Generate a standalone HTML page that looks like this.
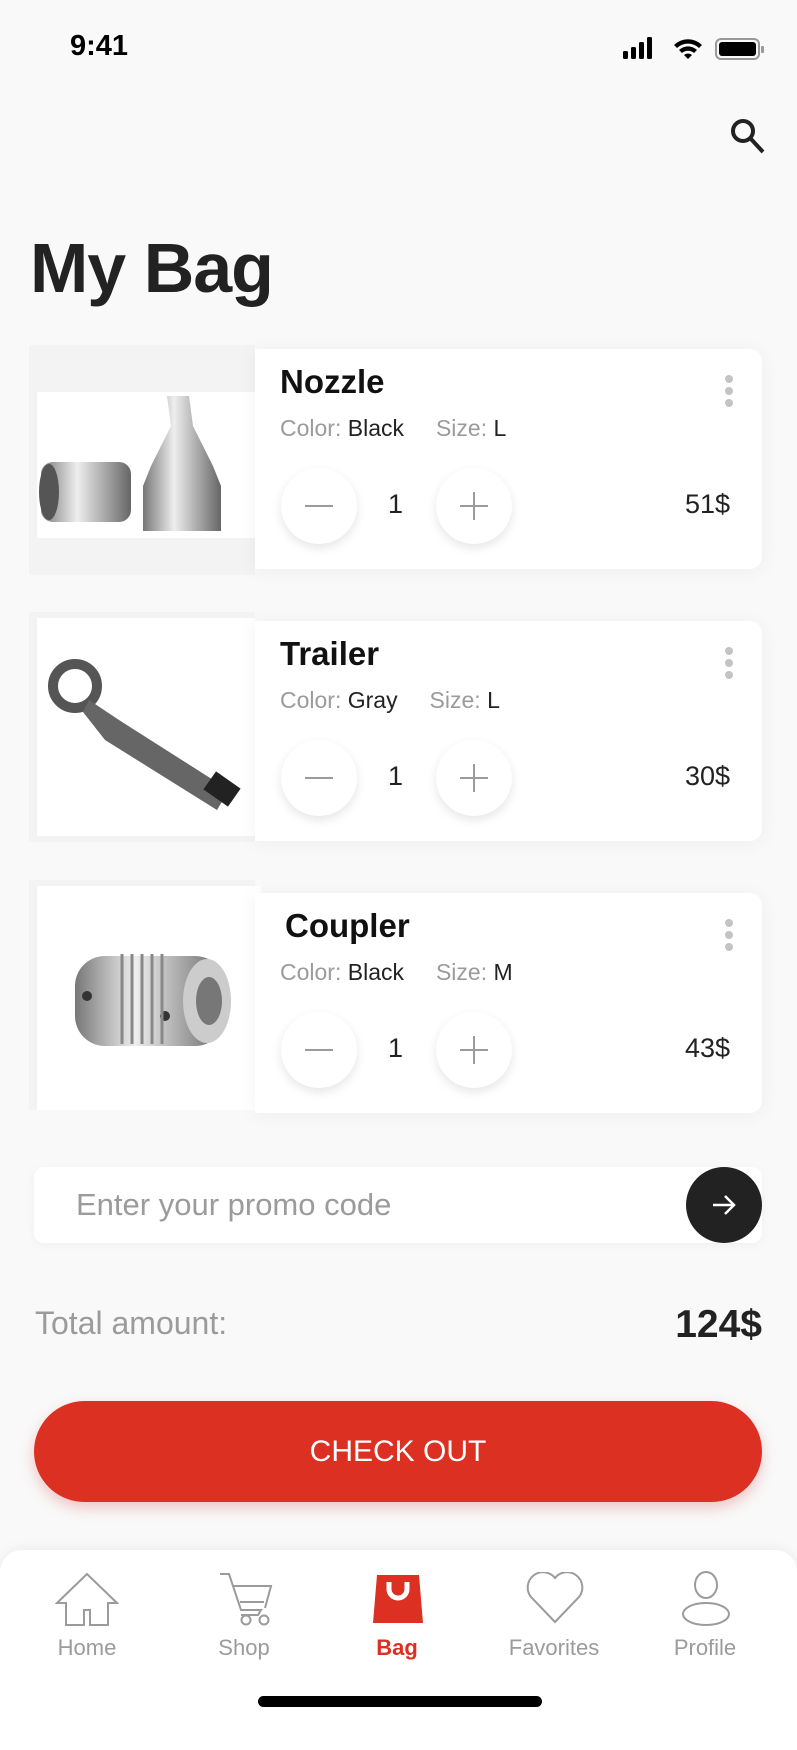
<!DOCTYPE html>
<html><head><meta charset="utf-8"><style>
*{margin:0;padding:0;box-sizing:border-box}
body{width:797px;height:1726px;background:#f9f9f9;font-family:"Liberation Sans",Arial,sans-serif;position:relative;overflow:hidden;color:#222}
.abs{position:absolute}
.card{position:absolute;left:255px;width:507px;height:220px;background:#fff;border-radius:0 12px 12px 0;box-shadow:0 2px 20px rgba(0,0,0,.05)}
.imgbox{position:absolute;left:29px;width:226px;height:230px;background:#f3f3f3}
.title{position:absolute;left:25px;top:14px;font-size:33px;font-weight:bold;color:#111}
.meta{position:absolute;left:25px;top:66px;font-size:23px;color:#9b9b9b}
.meta b{font-weight:normal;color:#222}
.btn{position:absolute;top:119px;width:76px;height:76px;border-radius:50%;background:#fff;box-shadow:0 4px 10px rgba(0,0,0,.1)}
.qty{position:absolute;left:133px;top:140px;font-size:27px;color:#222}
.price{position:absolute;right:32px;top:140px;font-size:27px;color:#222}
.dots{position:absolute;right:29px;top:26px;width:8px}
.dots i{display:block;width:8px;height:8px;border-radius:50%;background:#c4c4c4;margin-bottom:4px}
.nav{position:absolute;text-align:center;font-size:22px;color:#9b9b9b;width:130px;top:1635px}
</style></head><body>
<div class="abs" style="left:70px;top:30px;font-size:29px;font-weight:bold;color:#000">9:41</div>
<svg class="abs" style="left:623px;top:36px" width="145" height="26" viewBox="0 0 145 26">
<rect x="0" y="15" width="5" height="8" rx="1.5"/><rect x="8" y="11" width="5" height="12" rx="1.5"/><rect x="16" y="6" width="5" height="17" rx="1.5"/><rect x="24" y="1" width="5" height="22" rx="1.5"/>
<path d="M65 23l-4-4a6 6 0 0 1 8 0z M56 14a13 13 0 0 1 18 0l-3 3a9 9 0 0 0-12 0z M51 9a20 20 0 0 1 28 0l-3 3a16 16 0 0 0-22 0z"/>
<rect x="93" y="3" width="43" height="20" rx="5" fill="none" stroke="#999" stroke-width="2"/><rect x="96" y="6" width="37" height="14" rx="3"/><rect x="138" y="10" width="3" height="7" rx="1" fill="#999"/>
</svg>
<svg class="abs" style="left:728px;top:116px" width="40" height="40" viewBox="0 0 40 40"><circle cx="15" cy="15" r="10" fill="none" stroke="#222" stroke-width="4"/><path d="M23 23l12 13" stroke="#222" stroke-width="4"/></svg>
<div class="abs" style="left:30px;top:228px;font-size:70px;font-weight:bold;color:#222;letter-spacing:-1px">My Bag</div>

<!-- card 1 -->
<div class="imgbox" style="top:345px"><div class="abs" style="left:8px;top:47px;width:218px;height:146px;background:#fff"></div>
<svg class="abs" style="left:8px;top:47px" width="218" height="146" viewBox="0 0 218 146"><defs><linearGradient id="m" x1="0" x2="1"><stop offset="0" stop-color="#777"/><stop offset=".4" stop-color="#eee"/><stop offset=".7" stop-color="#aaa"/><stop offset="1" stop-color="#666"/></linearGradient></defs>
<rect x="4" y="70" width="90" height="60" rx="12" fill="url(#m)"/><ellipse cx="12" cy="100" rx="10" ry="28" fill="#555"/>
<path d="M130 4h22l4 30 20 40 8 20v45h-78v-45l8-20 20-40z" fill="url(#m)"/></svg></div>
<div class="card" style="top:349px">
<div class="title">Nozzle</div><div class="meta">Color: <b>Black</b> &nbsp;&nbsp;&nbsp; Size: <b>L</b></div>
<div class="dots"><i></i><i></i><i></i></div>
<div class="btn" style="left:26px"><div class="abs" style="left:24px;top:37px;width:28px;height:2px;background:#9b9b9b"></div></div>
<div class="qty">1</div>
<div class="btn" style="left:181px"><div class="abs" style="left:24px;top:37px;width:28px;height:2px;background:#9b9b9b"></div><div class="abs" style="left:37px;top:24px;width:2px;height:28px;background:#9b9b9b"></div></div>
<div class="price">51$</div></div>

<!-- card 2 -->
<div class="imgbox" style="top:612px"><div class="abs" style="left:8px;top:6px;width:218px;height:218px;background:#fff"></div>
<svg class="abs" style="left:8px;top:6px" width="218" height="218" viewBox="0 0 218 218"><circle cx="38" cy="68" r="22" fill="none" stroke="#555" stroke-width="10"/><path d="M52 82l30 20 110 70-12 20-112-70-22-28z" fill="#666"/><rect x="170" y="160" width="30" height="22" transform="rotate(35 185 171)" fill="#222"/></svg></div>
<div class="card" style="top:621px">
<div class="title">Trailer</div><div class="meta">Color: <b>Gray</b> &nbsp;&nbsp;&nbsp; Size: <b>L</b></div>
<div class="dots"><i></i><i></i><i></i></div>
<div class="btn" style="left:26px"><div class="abs" style="left:24px;top:37px;width:28px;height:2px;background:#9b9b9b"></div></div>
<div class="qty">1</div>
<div class="btn" style="left:181px"><div class="abs" style="left:24px;top:37px;width:28px;height:2px;background:#9b9b9b"></div><div class="abs" style="left:37px;top:24px;width:2px;height:28px;background:#9b9b9b"></div></div>
<div class="price">30$</div></div>

<!-- card 3 -->
<div class="imgbox" style="top:880px"><div class="abs" style="left:8px;top:6px;width:224px;height:224px;background:#fff"></div>
<svg class="abs" style="left:8px;top:6px" width="224" height="224" viewBox="0 0 224 224"><rect x="38" y="70" width="150" height="90" rx="30" fill="url(#m)"/><ellipse cx="170" cy="115" rx="24" ry="42" fill="#ccc"/><ellipse cx="172" cy="115" rx="13" ry="24" fill="#777"/><circle cx="50" cy="110" r="5" fill="#333"/><circle cx="128" cy="130" r="5" fill="#333"/><path d="M85 68v90M95 68v90M105 68v90M115 68v90M125 68v90" stroke="#888" stroke-width="3"/></svg></div>
<div class="card" style="top:893px">
<div class="title" style="left:30px">Coupler</div><div class="meta">Color: <b>Black</b> &nbsp;&nbsp;&nbsp; Size: <b>M</b></div>
<div class="dots"><i></i><i></i><i></i></div>
<div class="btn" style="left:26px"><div class="abs" style="left:24px;top:37px;width:28px;height:2px;background:#9b9b9b"></div></div>
<div class="qty">1</div>
<div class="btn" style="left:181px"><div class="abs" style="left:24px;top:37px;width:28px;height:2px;background:#9b9b9b"></div><div class="abs" style="left:37px;top:24px;width:2px;height:28px;background:#9b9b9b"></div></div>
<div class="price">43$</div></div>

<!-- promo -->
<div class="abs" style="left:34px;top:1167px;width:728px;height:76px;background:#fff;border-radius:10px;box-shadow:0 2px 10px rgba(0,0,0,.04)"></div>
<div class="abs" style="left:76px;top:1187px;font-size:31px;color:#9b9b9b">Enter your promo code</div>
<div class="abs" style="left:686px;top:1167px;width:76px;height:76px;border-radius:50%;background:#222"></div>
<svg class="abs" style="left:709px;top:1190px" width="30" height="30" viewBox="0 0 30 30"><path d="M4 15h21M16 6l9 9-9 9" fill="none" stroke="#fff" stroke-width="2.5"/></svg>

<div class="abs" style="left:35px;top:1305px;font-size:32px;color:#9b9b9b">Total amount:</div>
<div class="abs" style="right:35px;top:1303px;font-size:39px;font-weight:bold;color:#222">124$</div>

<div class="abs" style="left:34px;top:1401px;width:728px;height:101px;border-radius:51px;background:#db3022;box-shadow:0 6px 14px rgba(211,38,38,.25);color:#fff;font-size:30px;text-align:center;line-height:101px">CHECK OUT</div>

<!-- nav -->
<div class="abs" style="left:0;top:1550px;width:797px;height:200px;background:#fff;border-radius:22px 22px 0 0;box-shadow:0 -2px 12px rgba(0,0,0,.05)"></div>
<svg class="abs" style="left:55px;top:1572px" width="64" height="54" viewBox="0 0 64 54" fill="none" stroke="#9b9b9b" stroke-width="2"><path d="M32 2L2 31h9v22h18V38h6v15h18V31h9z"/></svg>
<svg class="abs" style="left:218px;top:1572px" width="58" height="54" viewBox="0 0 58 54" fill="none" stroke="#9b9b9b" stroke-width="2"><path d="M2 2h9l12 36h20l-3 5H23M11 2l4 12h38l-6 22M22 30h24"/><circle cx="28" cy="48" r="4.5"/><circle cx="46" cy="48" r="4.5"/></svg>
<svg class="abs" style="left:372px;top:1574px" width="52" height="50" viewBox="0 0 52 50"><path d="M5 1h42l4 48H1z" fill="#db3022"/><path d="M17 8v7a9 9 0 0 0 18 0V8" fill="none" stroke="#fff" stroke-width="5"/></svg>
<svg class="abs" style="left:524px;top:1572px" width="62" height="52" viewBox="0 0 62 52" fill="none" stroke="#9b9b9b" stroke-width="2"><path d="M31 50L7 25A14 14 0 0 1 31 6A14 14 0 0 1 55 25z"/></svg>
<svg class="abs" style="left:680px;top:1571px" width="52" height="56" viewBox="0 0 52 56" fill="none" stroke="#9b9b9b" stroke-width="2"><ellipse cx="26" cy="14" rx="11" ry="13"/><path d="M26 32c15 0 23 6 23 11s-8 11-23 11S3 48 3 43s8-11 23-11z"/></svg>
<div class="nav" style="left:22px">Home</div>
<div class="nav" style="left:179px">Shop</div>
<div class="nav" style="left:332px;color:#db3022;font-weight:bold">Bag</div>
<div class="nav" style="left:489px">Favorites</div>
<div class="nav" style="left:640px">Profile</div>
<div class="abs" style="left:258px;top:1696px;width:284px;height:11px;border-radius:6px;background:#000"></div>
</body></html>
